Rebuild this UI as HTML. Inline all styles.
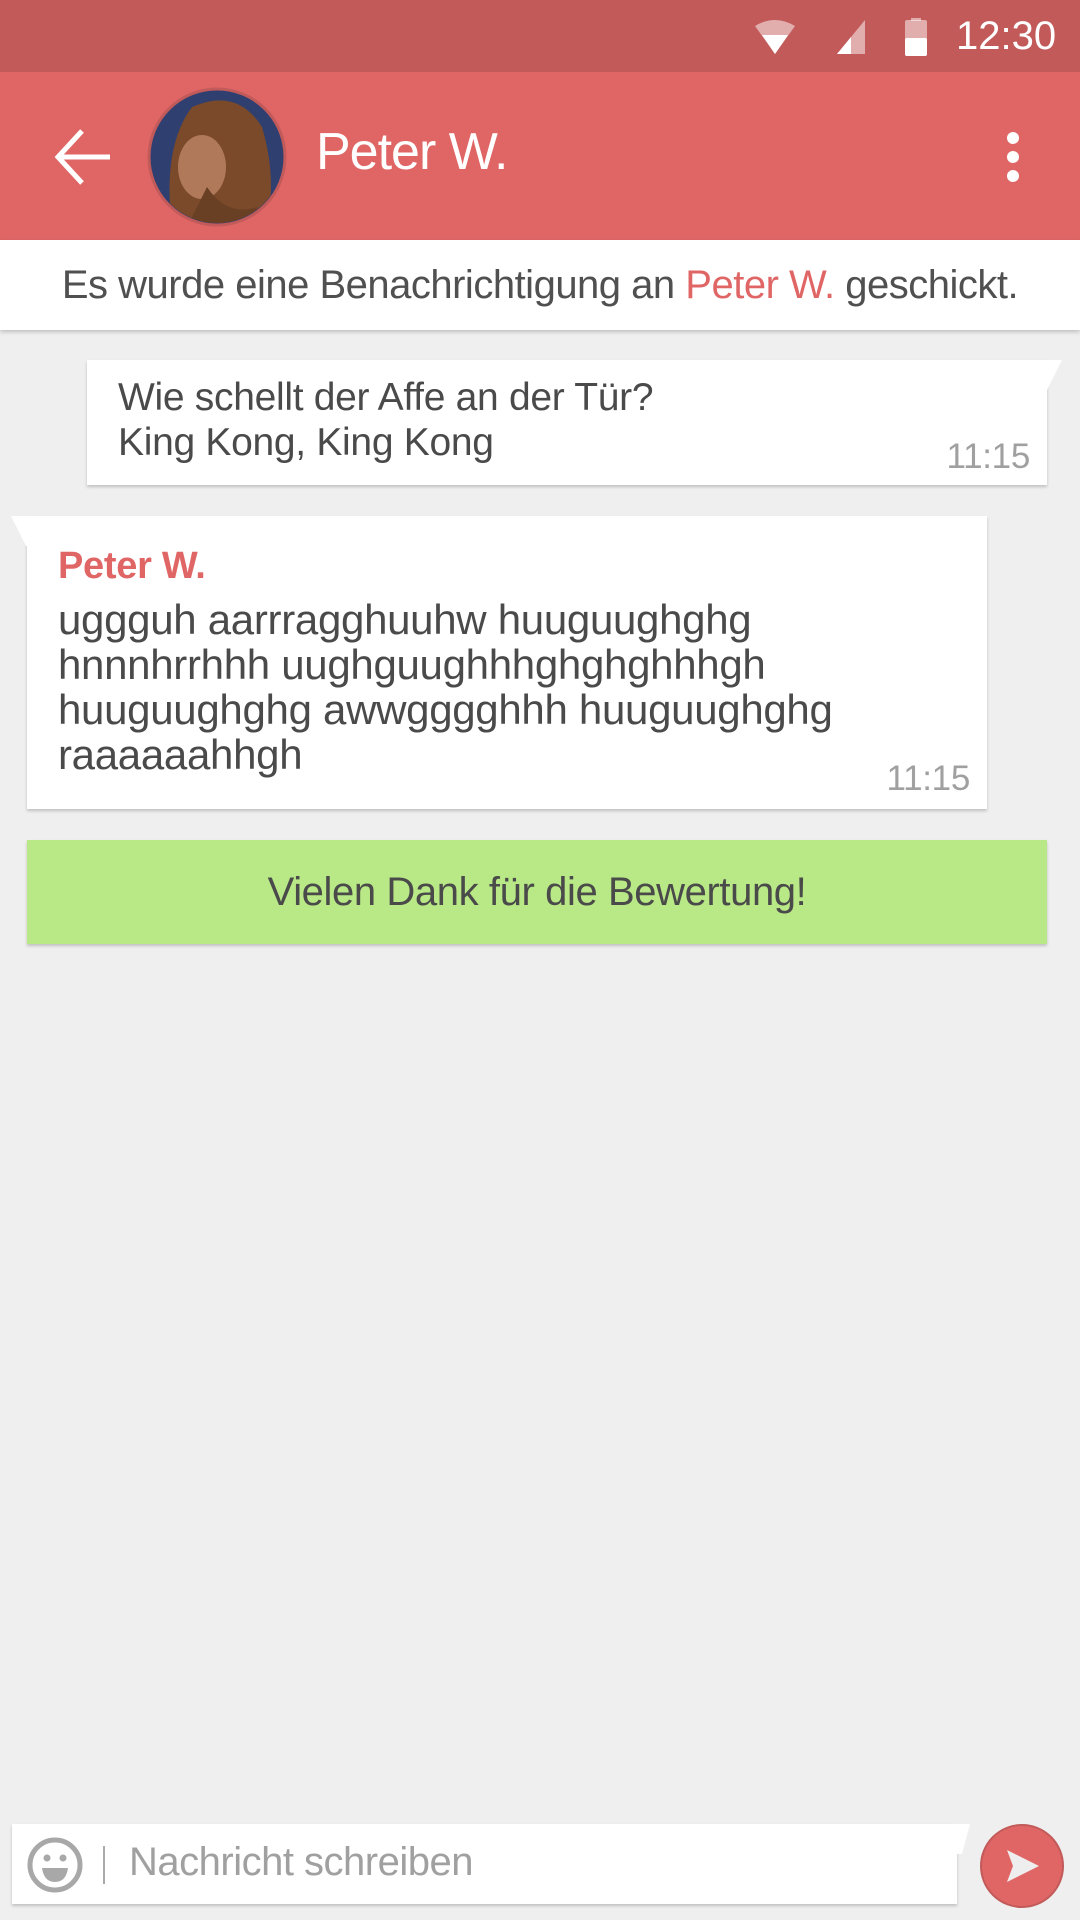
<!DOCTYPE html>
<html><head><meta charset="utf-8"><style>
*{margin:0;padding:0;box-sizing:border-box}
body{width:1080px;height:1920px;background:#efefef;font-family:"Liberation Sans",sans-serif;position:relative;overflow:hidden;color:#4a4a4a}
.abs{position:absolute}
.status{left:0;top:0;width:1080px;height:72px;background:#c25a5a}
.header{left:0;top:72px;width:1080px;height:168px;background:#e06666}
.notif{left:0;top:240px;width:1080px;height:90px;background:#fff;box-shadow:0 2px 4px rgba(0,0,0,.2);text-align:center;font-size:40px;line-height:90px;color:#505050;letter-spacing:-0.5px;white-space:nowrap}
.bubble{background:#fff;box-shadow:0 2px 3px rgba(0,0,0,.2);font-size:40px;line-height:45px;color:#4a4a4a;letter-spacing:-0.3px;white-space:nowrap}
.time{position:absolute;color:#a0a0a0;font-size:35px}
</style></head><body>
<div class="abs status"></div>
<svg class="abs" style="left:755px;top:18px" width="300" height="44">
<path d="M0 8 Q20 -4 40 8 L20 36 Z" fill="#fff" opacity=".5"/><path d="M7 17 L33 17 L20 36 Z" fill="#fff"/>
<path d="M82 36 L110 2 L110 36 Z" fill="#fff" opacity=".5"/><path d="M82 36 L96 19 L96 36 Z" fill="#fff"/>
<rect x="150" y="2" width="22" height="36" rx="2" fill="#fff" opacity=".5"/><rect x="156" y="-1" width="10" height="4" fill="#fff" opacity=".5"/><rect x="150" y="20" width="22" height="18" rx="2" fill="#fff"/>
</svg>
<div class="abs" style="left:956px;top:14px;font-size:40px;color:#fff">12:30</div>
<div class="abs header"></div>
<svg class="abs" style="left:52px;top:126px" width="62" height="62"><path d="M6 31 H58 M30 5 L6 31 L30 57" stroke="#fff" stroke-width="5" fill="none"/></svg>
<svg class="abs" style="left:147px;top:87px" width="140" height="140"><defs><clipPath id="c"><circle cx="70" cy="70" r="66"/></clipPath></defs>
<circle cx="70" cy="70" r="68" fill="#2e3f70" stroke="#c25a5a" stroke-width="3"/><g clip-path="url(#c)"><path d="M25 140 Q15 60 45 20 Q90 0 115 40 Q130 90 120 140 Z" fill="#7a4a2a"/><ellipse cx="55" cy="80" rx="24" ry="32" fill="#b07a5a"/><path d="M60 100 Q80 130 110 120 L110 140 L40 140Z" fill="#6a4024"/></g></svg>
<div class="abs" style="left:316px;top:122px;font-size:52px;color:#fff;letter-spacing:-1px">Peter W.</div>
<svg class="abs" style="left:1003px;top:132px" width="20" height="50"><circle cx="10" cy="6" r="6" fill="#fff"/><circle cx="10" cy="25" r="6" fill="#fff"/><circle cx="10" cy="44" r="6" fill="#fff"/></svg>
<div class="abs notif">Es wurde eine Benachrichtigung an <span style="color:#e06666">Peter W.</span> geschickt.</div>

<div class="abs bubble" style="left:87px;top:360px;width:960px;height:125px;padding:15px 0 0 31px;font-size:39px">Wie schellt der Affe an der Tür?<br>King Kong, King Kong<div class="time" style="right:17px;top:74px">11:15</div></div>
<svg class="abs" style="left:1040px;top:360px" width="22" height="40"><path d="M0 0 L22 0 L7 30 L0 30Z" fill="#fff"/></svg>

<div class="abs bubble" style="left:27px;top:516px;width:960px;height:293px;padding:28px 0 0 31px;font-size:42px"><div style="color:#e06666;font-weight:bold;font-size:38px;margin-bottom:8px">Peter W.</div>uggguh aarrragghuuhw huuguughghg<br>hnnnhrrhhh uughguughhhghghghhhgh<br>huuguughghg awwgggghhh huuguughghg<br>raaaaaahhgh<div class="time" style="right:17px;top:240px">11:15</div></div>
<svg class="abs" style="left:11px;top:516px" width="22" height="40"><path d="M22 0 L0 0 L15 30 L22 30Z" fill="#fff"/></svg>

<div class="abs" style="left:27px;top:840px;width:1020px;height:104px;background:#b8e986;box-shadow:0 2px 3px rgba(0,0,0,.2);text-align:center;line-height:104px;font-size:40px;color:#4a4a4a;letter-spacing:-0.4px">Vielen Dank für die Bewertung!</div>

<div class="abs" style="left:12px;top:1824px;width:945px;height:80px;background:#fff;box-shadow:0 2px 3px rgba(0,0,0,.2)"></div>
<svg class="abs" style="left:950px;top:1824px" width="24" height="40"><path d="M0 0 L20 0 L12 30 L0 30Z" fill="#fff"/></svg>
<svg class="abs" style="left:26px;top:1836px" width="60" height="60"><circle cx="29" cy="29" r="25" fill="none" stroke="#a8a8a8" stroke-width="5"/><circle cx="21" cy="22" r="3.5" fill="#a8a8a8"/><circle cx="37" cy="22" r="3.5" fill="#a8a8a8"/><path d="M16 32 H42 Q40 46 29 46 Q18 46 16 32Z" fill="#a8a8a8"/></svg>
<div class="abs" style="left:103px;top:1846px;width:2px;height:38px;background:#aaa"></div>
<div class="abs" style="left:129px;top:1840px;font-size:40px;color:#a0a0a0;letter-spacing:-0.5px">Nachricht schreiben</div>
<svg class="abs" style="left:979px;top:1823px" width="86" height="86"><circle cx="43" cy="43" r="41" fill="#e06666" stroke="#c25a5a" stroke-width="2"/><path d="M28 27 L60 43 L28 59 L34 43Z" fill="#eee"/></svg>
</body></html>
